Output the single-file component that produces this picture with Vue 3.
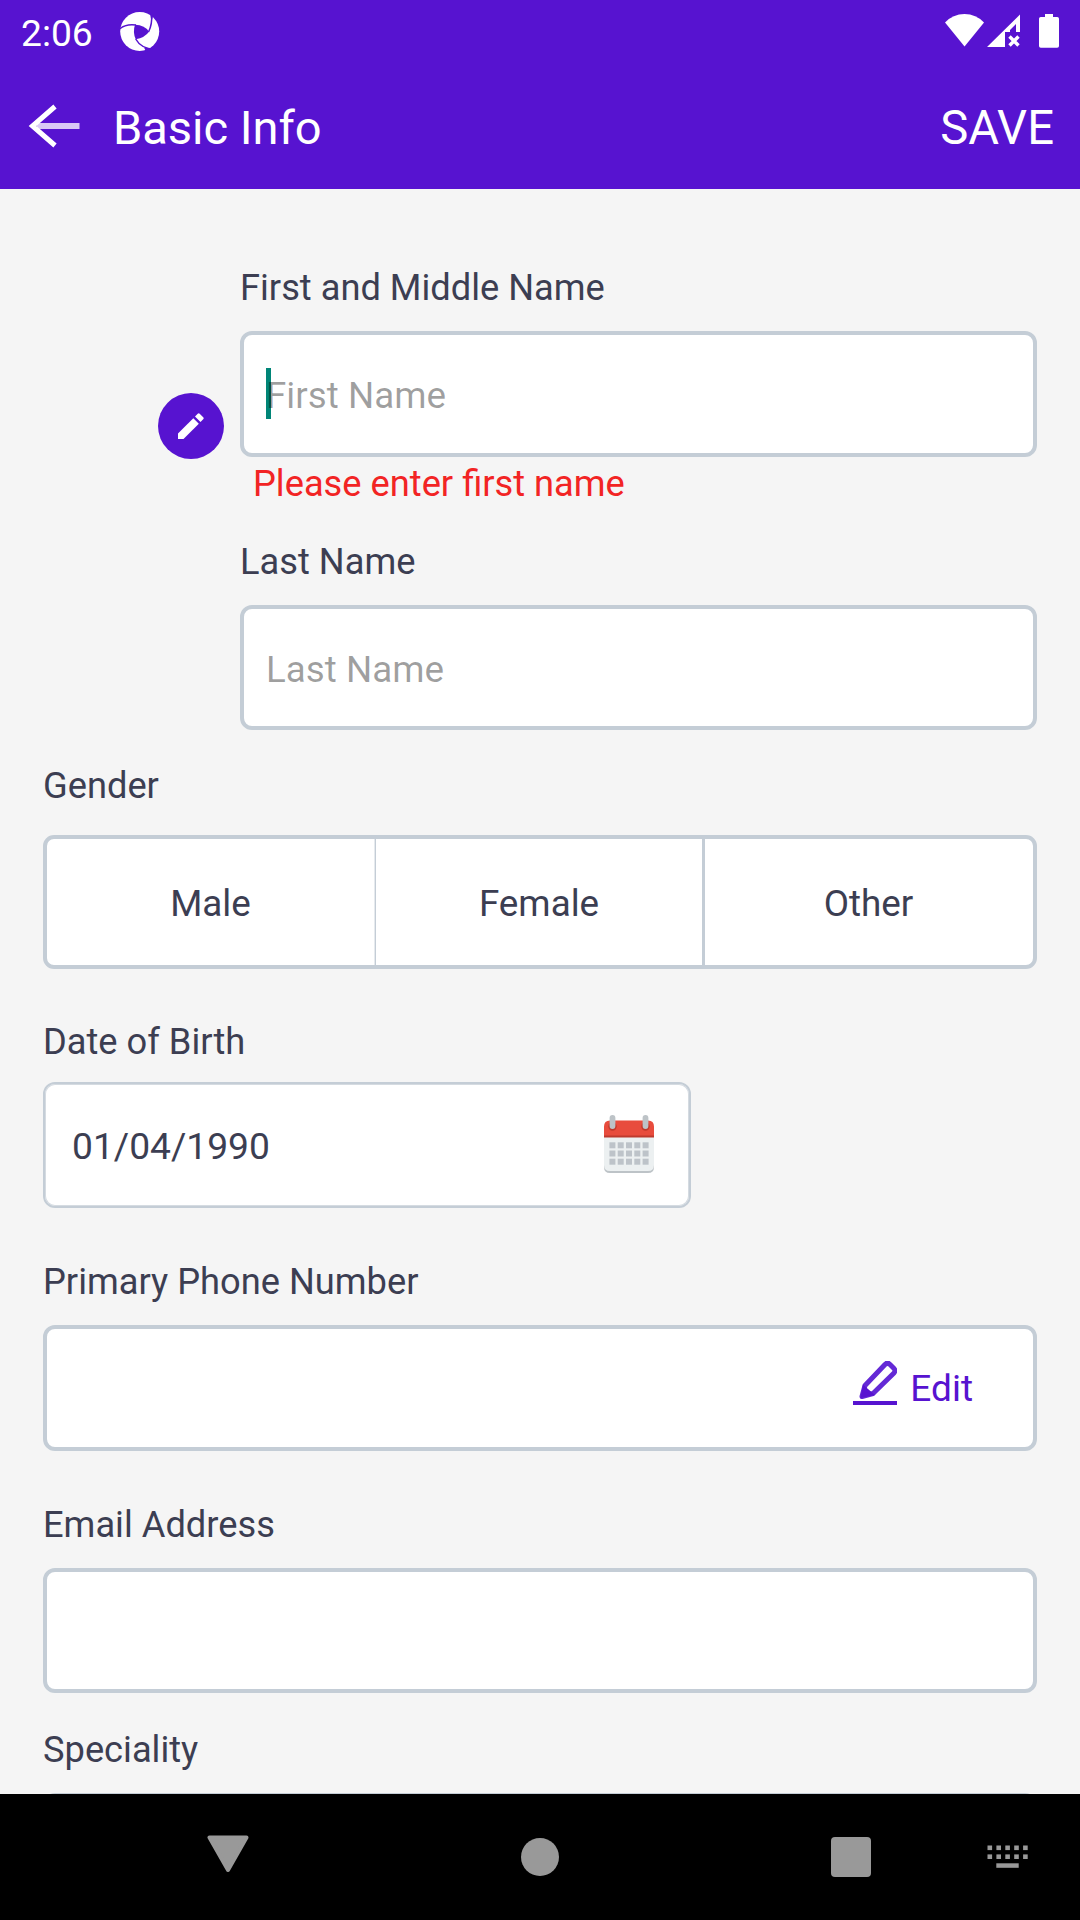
<script setup>
const genders = ['Male', 'Female', 'Other']
const dateCells = []
for (let r = 0; r < 3; r++) for (let c = 0; c < 5; c++) dateCells.push({ x: 5.4 + c * 8.3, y: 27.3 + r * 8.2 })
const keys = []
for (let r = 0; r < 2; r++) for (let c = 0; c < 5; c++) keys.push({ x: c * 8.9, y: r * 8.9 })
</script>

<template>
  <div class="screen">
    <header>
      <div class="status">
        <span class="time">2:06</span>
        <svg class="shutter" width="40" height="40" viewBox="0 0 40 40">
          <circle cx="19.700" cy="19.500" r="19.500" fill="#fff" />
          <path d="M15 12.700Q25 13 29 19.700Q25 25.500 15.700 27.300Q12.500 20 15 12.700Z" fill="#5713d0" />
          <g fill="none" stroke="#5713d0" stroke-width="1.500">
            <path d="M-.5 17Q6 11.500 16 13" />
            <path d="M31.500 2Q32.500 12 28.500 20" />
            <path d="M15.700 27Q21 36.500 34 37.300" />
          </g>
          <path d="M30 1.500L33 4.500L31.500 9Z" fill="#5713d0" />
          <path d="M26 39.500L34 36.500L24 35.500Z" fill="#5713d0" />
        </svg>
        <svg class="signals" width="116" height="36" viewBox="0 0 116 36" fill="#fff">
          <path d="M0 9.500Q8 1 19.500 1T39 9.500L19.500 33.500Z" />
          <path d="M42 34L75 1.500V19H71V11L65 17V19H60V34Z" />
          <path d="M64.500 23.500l9 9m0-9l-9 9" stroke="#fff" stroke-width="3.400" />
          <path d="M100 1h8v3h4.200q1.800 0 1.800 1.800v27.200q0 1.800-1.800 1.800h-16.400q-1.800 0-1.800-1.800V5.800q0-1.800 1.800-1.800H100z" />
        </svg>
      </div>
      <div class="toolbar">
        <svg class="back" width="54" height="46" viewBox="0 0 54 46">
          <path d="M9 23H51.500" fill="none" stroke="#d9c9f5" stroke-width="6" />
          <path d="M27 3.500L4.500 23L27 42.500" fill="none" stroke="#fff" stroke-width="5" />
        </svg>
        <h1>Basic Info</h1>
        <span class="save">SAVE</span>
      </div>
    </header>

    <main>
      <div class="names">
        <div class="avatar">
          <span class="fab">
            <svg width="26" height="26" viewBox="0 0 26 26" fill="#fff">
              <path d="M0 20.500L15.300 5.200L20.800 10.700L5.500 26H0Z" />
              <path d="M17 3.500L19.700.8q1-1 2 0l3.500 3.500q1 1 0 2L22.500 9Z" />
            </svg>
          </span>
        </div>
        <div class="name-fields">
          <label>First and Middle Name</label>
          <div class="box first"><i class="caret"></i><span class="hint">First Name</span></div>
          <p class="error">Please enter first name</p>
          <label>Last Name</label>
          <div class="box last"><span class="hint">Last Name</span></div>
        </div>
      </div>

      <label class="l-gender">Gender</label>
      <div class="genders">
        <div v-for="g in genders" :key="g" class="gender">{{ g }}</div>
      </div>

      <label class="l-dob">Date of Birth</label>
      <div class="box dob">
        <span class="date">01/04/1990</span>
        <svg width="50" height="58" viewBox="0 0 50 58">
          <path d="M0 22H50V52q0 6-6 6H6q-6 0-6-6Z" fill="#bdc3c7" />
          <path d="M0 22H50V50q0 6-6 6H6q-6 0-6-6Z" fill="#ecf0f1" />
          <path d="M0 22V11.500q0-6 6-6H44q6 0 6 6V22Z" fill="#e84c3d" />
          <path d="M0 20.500H50V22.500H0Z" fill="#bd3a2e" />
          <circle cx="8.500" cy="11.500" r="4.200" fill="#c0392b" />
          <circle cx="41.500" cy="11.500" r="4.200" fill="#c0392b" />
          <rect x="5.600" y="0" width="5.800" height="14" rx="2.900" fill="#bdc3c7" />
          <rect x="38.600" y="0" width="5.800" height="14" rx="2.900" fill="#bdc3c7" />
          <rect v-for="(d, i) in dateCells" :key="i" :x="d.x" :y="d.y" width="6" height="6" fill="#bdc3c9" />
        </svg>
      </div>

      <label class="l-phone">Primary Phone Number</label>
      <div class="box phone">
        <svg width="44" height="44" viewBox="0 0 44 44">
          <path d="M0 42H44" stroke="#5713d0" stroke-width="4" />
          <path class="pen" d="M12 24.500L32 3.500Q34.500 1 37 3.500L41 7.500Q43 9.500 41 12L20 32.500L9 35.500Z" fill="none" stroke="#6429d6" stroke-width="5" stroke-linejoin="round" />
          <path class="pen" d="M7.500 37L10 23.500L15 28L22 34Z" fill="#5713d0" />
        </svg>
        <span>Edit</span>
      </div>

      <label class="l-email">Email Address</label>
      <div class="box email"></div>

      <label class="l-spec">Speciality</label>
      <div class="box spec"></div>
    </main>

    <nav>
      <svg class="n-back" width="42" height="38" viewBox="0 0 42 38"><path d="M2.500 2.500H39.500L21 35Z" fill="#999" stroke="#999" stroke-width="4" stroke-linejoin="round" /></svg>
      <span class="n-home"></span>
      <span class="n-recent"></span>
      <svg class="n-keys" width="42" height="24" viewBox="0 0 42 24" fill="#999">
        <rect v-for="(k, i) in keys" :key="i" :x="k.x + .5" :y="k.y + .5" width="4.600" height="4.600" />
        <rect x="9.300" y="18.300" width="22.400" height="4.500" />
      </svg>
    </nav>
  </div>
</template>

<style>
body { margin: 0; }
</style>

<style scoped>
.screen {
  width: 1080px;
  height: 1920px;
  overflow: hidden;
  display: flex;
  flex-direction: column;
  background: #f5f5f5;
  color: #3c3e52;
  font: 36.25px/43px Roboto, sans-serif;
}
header { height: 189px; flex: none; background: #5713d0; color: #fff; }
.status { height: 63px; display: flex; align-items: flex-start; padding: 0 19px 0 21px; }
.time { font-size: 37.2px; margin-top: 12px; width: 99px; }
.shutter { margin-top: 12px; }
.signals { margin: 13px 0 0 auto; }
.toolbar { height: 126px; display: flex; align-items: center; padding: 0 26px 0 28px; }
.back { filter: blur(.7px); }
h1 { margin: 4px 0 0 31px; font-size: 47px; font-weight: 400; line-height: 54px; }
.save { margin: 4px 0 0 auto; font-size: 47.2px; line-height: 54px; }
main { flex: none; height: 1605px; overflow: hidden; padding: 0 43px; box-sizing: border-box; }
label { display: block; height: 43px; white-space: nowrap; }
.names { display: flex; padding-top: 77px; }
.avatar { width: 197px; display: flex; justify-content: flex-end; }
.fab { width: 66px; height: 66px; margin: 127px 16px 0 0; border-radius: 50%; background: #5713d0; display: flex; align-items: center; justify-content: center; }
.name-fields { flex: 1; }
.box { box-sizing: border-box; display: flex; align-items: center; border: 4px solid #c4cdd6; border-radius: 12px; background: #fff; }
.first { height: 126px; margin-top: 22px; padding-left: 22px; position: relative; }
.caret { position: absolute; left: 22px; top: 33px; width: 5px; height: 51px; background: #008577; }
.hint { position: relative; color: rgba(0, 0, 0, .38); padding-top: 2px; font-size: 36.8px; }
.error { margin: 5px 0 35px 13px; color: #f22424; }
.last { height: 125px; margin-top: 22px; padding-left: 22px; }
.last .hint { padding-top: 3px; }
.l-gender { margin-top: 34px; }
.genders { box-sizing: border-box; height: 134px; margin-top: 28px; border: 4px solid #c4cdd6; border-radius: 11px; background: #fff; display: flex; overflow: hidden; font-size: 36.8px; }
.gender { box-sizing: border-box; display: flex; align-items: center; justify-content: center; flex: none; width: 329px; border-right: 1px solid #c4cdd6; box-shadow: inset -1px 0 #e6eaee; padding: 3px 1px 0 0; }
.gender:nth-child(2) { border-right-width: 3px; box-shadow: none; padding-right: 0; }
.gender:last-child { border: 0; width: 328px; box-shadow: none; }
.l-dob { margin-top: 51px; }
.dob { width: 648px; height: 126px; margin-top: 19px; border-width: 2px; box-shadow: inset 0 0 0 1px #d5dbe1; padding: 0 35px 0 27px; justify-content: space-between; }
.date { padding-top: 3px; font-size: 37.2px; }
.dob svg { margin-bottom: 3px; }
.l-phone { margin-top: 52px; }
.phone { height: 126px; margin-top: 22px; padding-right: 60px; justify-content: flex-end; gap: 13px; color: #5713d0; font-size: 37px; }
.phone span { padding-top: 1px; }
.phone svg { margin-bottom: 10px; }
.pen { filter: blur(.6px); }
.l-email { margin-top: 52px; }
.email { height: 125px; margin-top: 22px; }
.l-spec { margin-top: 35px; }
.spec { height: 126px; margin-top: 22px; }
nav { flex: none; height: 126px; background: #000; display: flex; align-items: flex-start; }
.n-back { margin: 41px 0 0 207px; }
.n-home { width: 38px; height: 38px; border-radius: 50%; background: #999; margin: 44px 0 0 272px; }
.n-recent { width: 40px; height: 40px; border-radius: 4px; background: #999; margin: 43px 0 0 272px; }
.n-keys { margin: 51px 0 0 116px; }
</style>
